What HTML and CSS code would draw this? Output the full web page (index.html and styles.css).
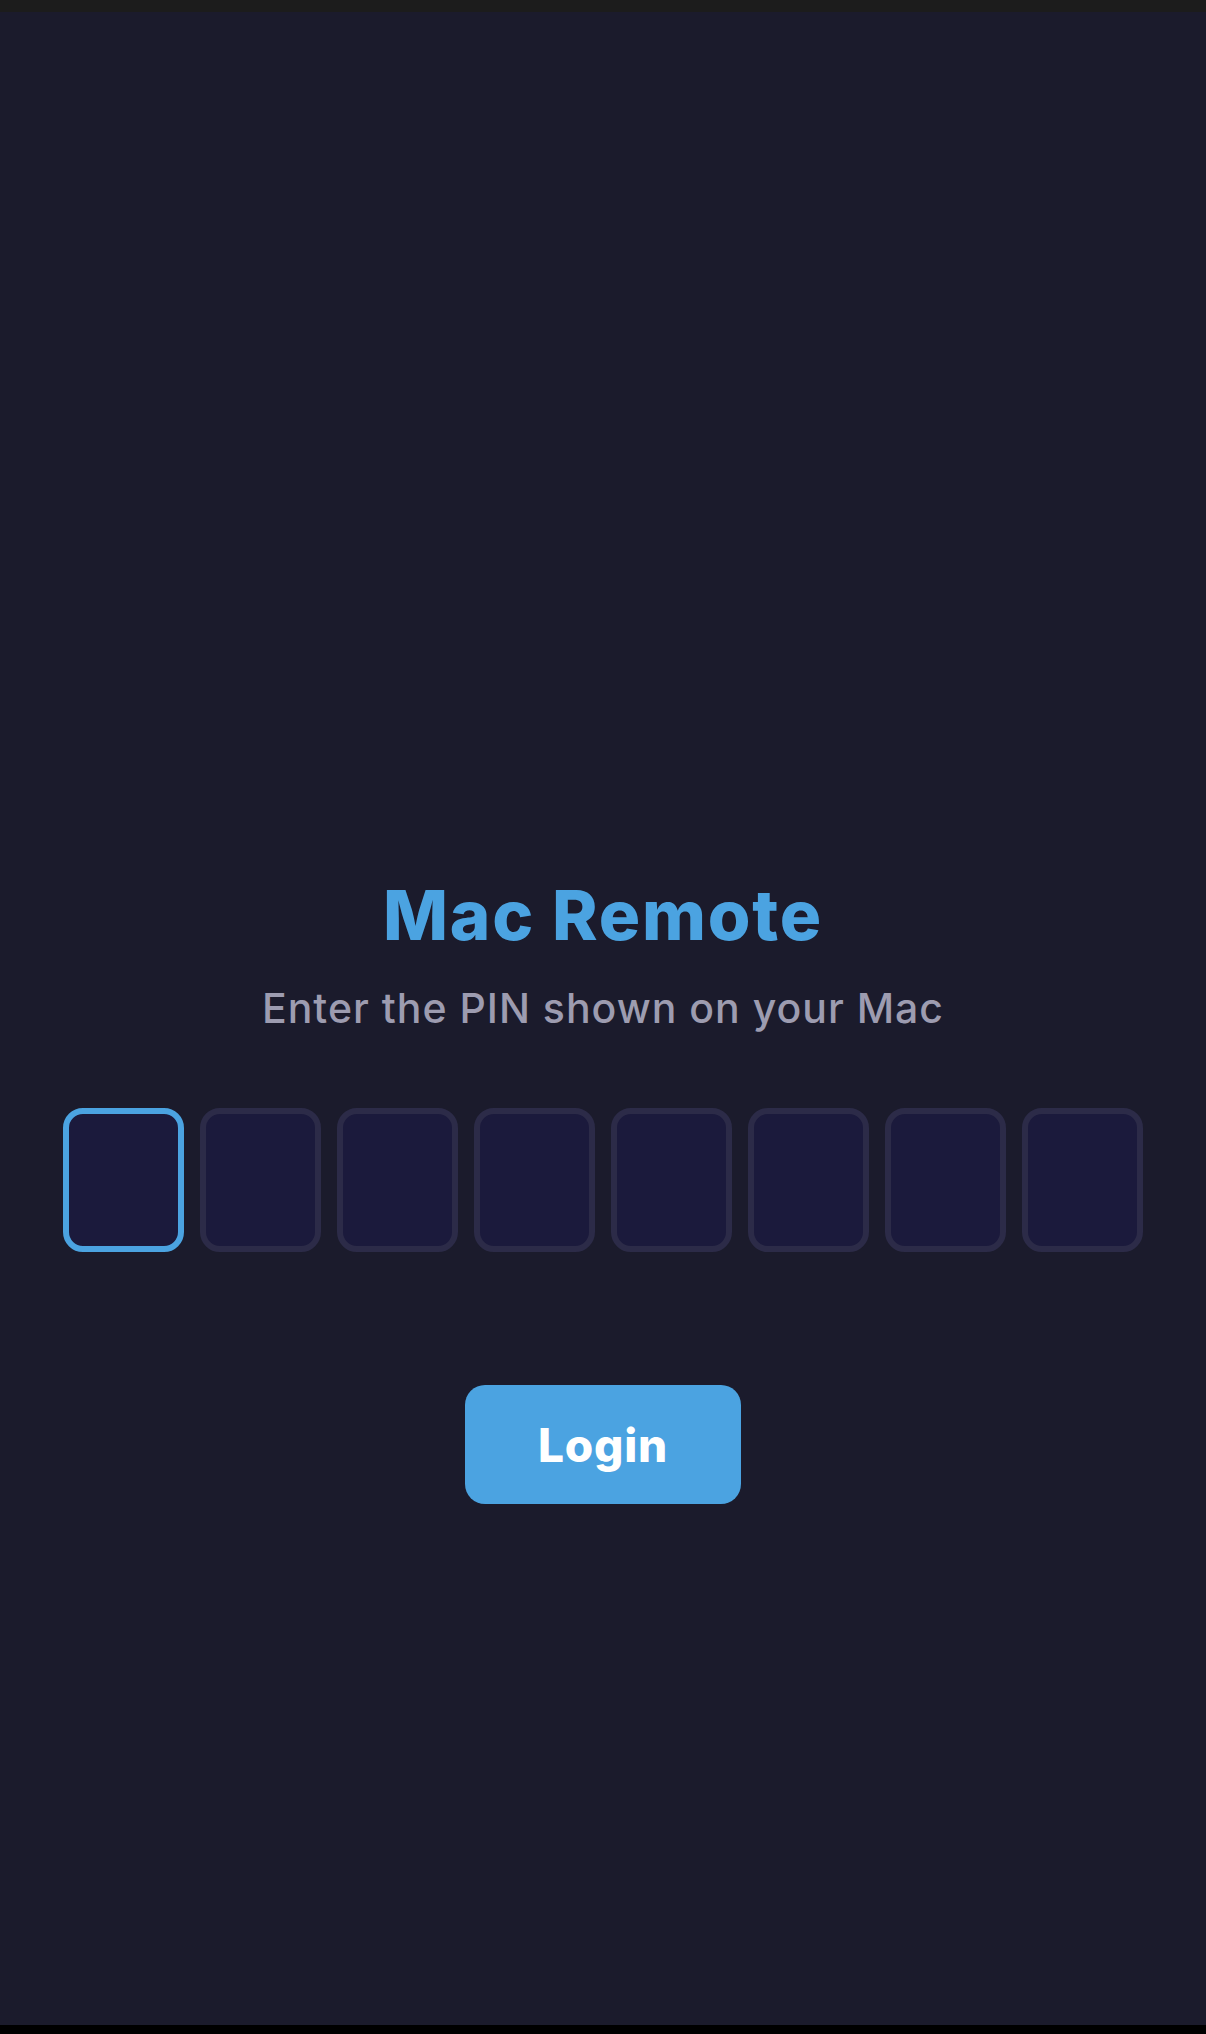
FILE: index.html
```html
<!DOCTYPE html>
<html>
<head>
    <title>Mac Remote</title>
    <link rel="stylesheet" href="styles.css">
</head>
<body>
    <div class="status-bar"></div>

    <main class="app">
        <div class="login-card">
            <h1 class="title">Mac Remote</h1>
            <p class="subtitle">Enter the PIN shown on your Mac</p>

            <div class="pin-row">
                <input class="pin-digit active" type="text" inputmode="numeric" maxlength="1">
                <input class="pin-digit" type="text" inputmode="numeric" maxlength="1">
                <input class="pin-digit" type="text" inputmode="numeric" maxlength="1">
                <input class="pin-digit" type="text" inputmode="numeric" maxlength="1">
                <input class="pin-digit" type="text" inputmode="numeric" maxlength="1">
                <input class="pin-digit" type="text" inputmode="numeric" maxlength="1">
                <input class="pin-digit" type="text" inputmode="numeric" maxlength="1">
                <input class="pin-digit" type="text" inputmode="numeric" maxlength="1">
            </div>

            <button class="login-btn">Login</button>
        </div>
    </main>

    <div class="home-strip"></div>
</body>
</html>
```

FILE: styles.css
```css
:root {
    --background: #1b1b2c;
    --status: #1c1c1c;
    --accent: #4ba3e1;
    --muted: #9d9cb0;
    --digit-bg: #1b1a3c;
    --digit-border: #2c2b48;
}

* {
    box-sizing: border-box;
}

body {
    margin: 0;
    background: #000;
    font-family: Inter, "Noto Sans", sans-serif;
    color: #fff;
}

.status-bar {
    height: 12px;
    background: var(--status);
}

.app {
    height: 2013px;
    background: var(--background);
    padding-top: 861px;
}

.login-card {
    display: flex;
    flex-direction: column;
    align-items: center;
}

.title {
    margin: 0;
    font-size: 69px;
    line-height: 84px;
    font-weight: 800;
    color: var(--accent);
    letter-spacing: 1.8px;
}

.subtitle {
    margin: 26px 0 0;
    font-size: 41px;
    line-height: 50px;
    font-weight: 500;
    color: var(--muted);
    letter-spacing: 1px;
}

.pin-row {
    display: flex;
    gap: 16px;
    margin-top: 75px;
}

.pin-digit {
    width: 121px;
    height: 144px;
    padding: 0;
    border: 6px solid var(--digit-border);
    border-radius: 20px;
    background: var(--digit-bg);
    color: #fff;
    font-family: inherit;
    font-size: 56px;
    font-weight: 700;
    text-align: center;
    outline: none;
}

.pin-digit.active,
.pin-digit:focus {
    border-color: var(--accent);
}

.login-btn {
    margin-top: 133px;
    width: 276px;
    height: 119px;
    border: none;
    border-radius: 20px;
    background: var(--accent);
    color: #fff;
    font-family: inherit;
    font-size: 46px;
    font-weight: 800;
    letter-spacing: 0.8px;
    cursor: pointer;
}

.home-strip {
    height: 9px;
    background: #000;
}
```
